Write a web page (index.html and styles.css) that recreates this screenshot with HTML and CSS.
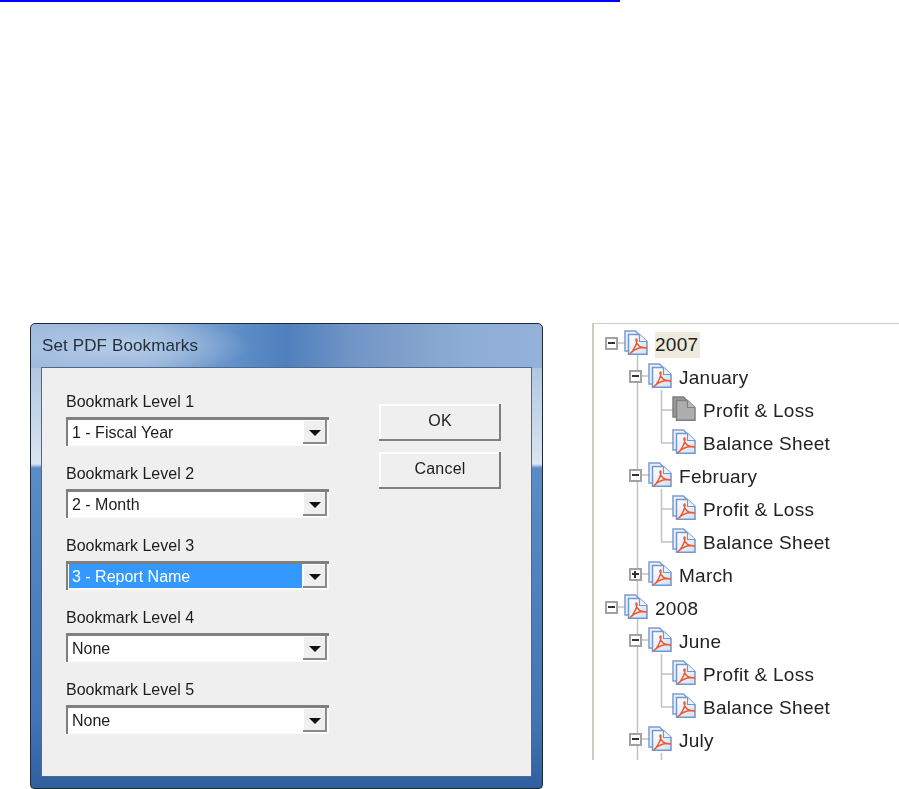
FILE: index.html
```html
<!DOCTYPE html>
<html lang="en">
<head>
<meta charset="utf-8">
<title>Set PDF Bookmarks</title>
<link rel="stylesheet" href="styles.css">
</head>
<body>
<svg class="defs" width="0" height="0" aria-hidden="true">
  <defs>
    <linearGradient id="pg" x1="0" y1="0" x2="1" y2="1"><stop offset="0" stop-color="#ffffff"/><stop offset="1" stop-color="#d3e1f3"/></linearGradient>
    <symbol id="pdf" viewBox="0 0 24 25">
      <path d="M1 1H11.500L15 4.500V21H1Z" fill="#eaf1fa" stroke="#7d9ccb" stroke-width="1.500"/>
      <path d="M4.500 4.500H15.500L23 11.500V24.200H4.500Z" fill="url(#pg)" stroke="#7097cf" stroke-width="1.500"/>
      <path d="M15.500 4.500V11.500H23" fill="#f2f6fc" stroke="#7097cf" stroke-width="1.200"/>
      <path d="M6 23.500C9 21.500 13.200 14 13 10C12.900 8.500 11.800 8.500 12 10.500C12.500 15 16.500 18.300 22.500 18C19.500 16.800 11.500 17.500 6 23.500Z" fill="none" stroke="#ee5a30" stroke-width="1.500" stroke-linejoin="round"/>
    </symbol>
    <symbol id="pdf-off" viewBox="0 0 24 25">
      <path d="M1 1H11.500L15 4.500V21H1Z" fill="#9a9a9a" stroke="#808080" stroke-width="1.500"/>
      <path d="M4.500 4.500H15.500L23 11.500V24.200H4.500Z" fill="#aeaeae" stroke="#808080" stroke-width="1.500"/>
      <path d="M15.500 4.500V11.500H23" fill="#b8b8b8" stroke="#808080" stroke-width="1.200"/>
    </symbol>
  </defs>
</svg>
<div class="rule"></div>
<main class="stage">
  <section class="dialog">
    <h1 class="title">Set PDF Bookmarks</h1>
    <div class="panel">
      <div class="fields">
        <div class="field"><label class="label">Bookmark Level 1</label>
          <div class="combo"><span class="value">1 - Fiscal Year</span><span class="drop"><i class="arrow"></i></span></div></div>
        <div class="field"><label class="label">Bookmark Level 2</label>
          <div class="combo"><span class="value">2 - Month</span><span class="drop"><i class="arrow"></i></span></div></div>
        <div class="field"><label class="label">Bookmark Level 3</label>
          <div class="combo"><span class="value selected">3 - Report Name</span><span class="drop"><i class="arrow"></i></span></div></div>
        <div class="field"><label class="label">Bookmark Level 4</label>
          <div class="combo"><span class="value">None</span><span class="drop"><i class="arrow"></i></span></div></div>
        <div class="field"><label class="label">Bookmark Level 5</label>
          <div class="combo"><span class="value">None</span><span class="drop"><i class="arrow"></i></span></div></div>
      </div>
      <div class="actions">
        <button class="btn" type="button">OK</button>
        <button class="btn" type="button">Cancel</button>
      </div>
    </div>
  </section>
  <section class="tree">
    <svg class="lines" width="306" height="436" aria-hidden="true">
      <path d="M43.500 30V436M67.500 66V119M67.500 165V218M67.500 330V383M67.500 429V436M67 86H79M67 119H79M67 185H79M67 218H79M67 350H79M67 383H79M48 52H55M48 151H55M48 250H55M48 316H55M48 415H55M24 19H31M24 283H31" fill="none" stroke="#c2c2c2" stroke-width="1.500"/>
    </svg>
    <div class="node l0"><span class="toggle minus"></span><svg class="ico"><use href="#pdf"/></svg><span class="name current">2007</span></div>
    <div class="node l1"><span class="toggle minus"></span><svg class="ico"><use href="#pdf"/></svg><span class="name">January</span></div>
    <div class="node l2"><svg class="ico"><use href="#pdf-off"/></svg><span class="name">Profit &amp; Loss</span></div>
    <div class="node l2"><svg class="ico"><use href="#pdf"/></svg><span class="name">Balance Sheet</span></div>
    <div class="node l1"><span class="toggle minus"></span><svg class="ico"><use href="#pdf"/></svg><span class="name">February</span></div>
    <div class="node l2"><svg class="ico"><use href="#pdf"/></svg><span class="name">Profit &amp; Loss</span></div>
    <div class="node l2"><svg class="ico"><use href="#pdf"/></svg><span class="name">Balance Sheet</span></div>
    <div class="node l1"><span class="toggle plus"></span><svg class="ico"><use href="#pdf"/></svg><span class="name">March</span></div>
    <div class="node l0"><span class="toggle minus"></span><svg class="ico"><use href="#pdf"/></svg><span class="name">2008</span></div>
    <div class="node l1"><span class="toggle minus"></span><svg class="ico"><use href="#pdf"/></svg><span class="name">June</span></div>
    <div class="node l2"><svg class="ico"><use href="#pdf"/></svg><span class="name">Profit &amp; Loss</span></div>
    <div class="node l2"><svg class="ico"><use href="#pdf"/></svg><span class="name">Balance Sheet</span></div>
    <div class="node l1"><span class="toggle minus"></span><svg class="ico"><use href="#pdf"/></svg><span class="name">July</span></div>
  </section>
</main>
</body>
</html>
```
FILE: styles.css
```css
* { box-sizing: border-box; }
html, body { margin: 0; padding: 0; background: #fff; }
body { width: 899px; height: 789px; overflow: hidden; font-family: "Liberation Sans", Arial, sans-serif; color: #1c1c1c; }
.defs { position: absolute; }
.rule { width: 620px; height: 2px; background: #0000ff; }
.stage { display: flex; align-items: flex-start; margin-top: 321px; padding-left: 30px; }

.dialog {
  width: 513px; height: 466px; flex: none;
  display: flex; flex-direction: column;
  padding: 0 10px 11px 10px;
  border: 1px solid #1f2a38;
  border-radius: 5px 5px 4px 4px;
  background:
    radial-gradient(ellipse 130px 30px at 90px 22px, rgba(190,210,235,.85), rgba(190,210,235,0)) no-repeat,
    linear-gradient(90deg, #9db9dc 0, #8eadd6 25%, #5b8cc6 42%, #4f80bd 50%, #6f94c6 62%, #7f9fcb 72%, #8eadd5 85%, #94b1d8 100%) top / 100% 44px no-repeat,
    linear-gradient(180deg, #9dbadc 0, #d3e0ee 125px, #dbe6f1 140px, #5a8cc6 144px, #4274b4 400px, #2f5f9f 100%);
  filter: blur(0.45px);
}
.title { margin: 0; height: 43px; padding: 0 0 0 1px; display: flex; align-items: center; font-size: 17px; font-weight: 400; letter-spacing: .12px; color: #22303f; }
.panel {
  flex: 1; display: flex; align-items: flex-start;
  padding: 24px 0 0 24px;
  background: #efefef;
  border: 1px solid #4a6a8f;
}
.fields { display: flex; flex-direction: column; gap: 18px; width: 263px; }
.field { display: flex; flex-direction: column; }
.label { height: 25px; line-height: 20px; font-size: 16px; }
.combo {
  height: 29px; display: flex; padding: 3px 2px 2px 3px;
  background: #fff;
  box-shadow: inset 2px 3px 0 #808080, inset -1px -1px 0 #f9f9f9;
}
.value { flex: 1; display: block; padding-left: 3px; font-size: 16px; line-height: 26px; }
.value.selected { background: #3399ff; color: #fff; outline: 1px dotted #c9761f; outline-offset: -1px; margin-right: 1px; }
.drop {
  width: 24px; flex: none; display: flex; align-items: center; justify-content: center;
  background: #efefef;
  box-shadow: inset -2px -2px 0 #8a8a8a, inset 1px 1px 0 #fff;
}
.arrow { display: block; width: 0; height: 0; border: 6px solid transparent; border-top-color: #111; border-bottom: 0; margin-top: 1px; }

.actions { display: flex; flex-direction: column; gap: 11px; margin: 12px 0 0 50px; }
.btn {
  width: 122px; height: 37px; padding: 0 0 3px 0;
  font: 16px "Liberation Sans", Arial, sans-serif; letter-spacing: .2px; color: #1c1c1c;
  background: #efefef; border: 0;
  box-shadow: inset -2px -2px 0 #7f7f7f, inset 2px 2px 0 #fdfdfd;
}

.tree {
  position: relative; width: 307px; height: 437px; margin-left: 49px; flex: none;
  padding: 4px 0 0 0;
  border-top: 1px solid #cfccbd; border-left: 2px solid #cfccbd;
  filter: blur(0.35px);
  overflow: hidden;
}
.lines { position: absolute; left: 0; top: 0; }
.node { position: relative; height: 33px; display: flex; align-items: center; font-size: 19px; letter-spacing: .27px; color: #222; }
.node.l0 { padding-left: 30px; }
.node.l1 { padding-left: 54px; }
.node.l2 { padding-left: 78px; }
.toggle { position: absolute; top: 9px; width: 13px; height: 13px; border: 2px solid #a2a2a2; background: #fff; display: block; }
.l0 .toggle { left: 11px; }
.l1 .toggle { left: 35px; }
.toggle::before { content: ""; position: absolute; left: 1px; right: 1px; top: 3px; height: 2px; background: #333; }
.toggle.plus::after { content: ""; position: absolute; top: 1px; bottom: 1px; left: 3px; width: 2px; background: #333; }
.ico { position: relative; width: 24px; height: 25px; flex: none; margin-bottom: 4px; }
.name { margin-left: 7px; padding: 1px 2px 1px 0; }
.name.current { background: #eeeadd; padding: 2px 2px 2px 0; }
```
